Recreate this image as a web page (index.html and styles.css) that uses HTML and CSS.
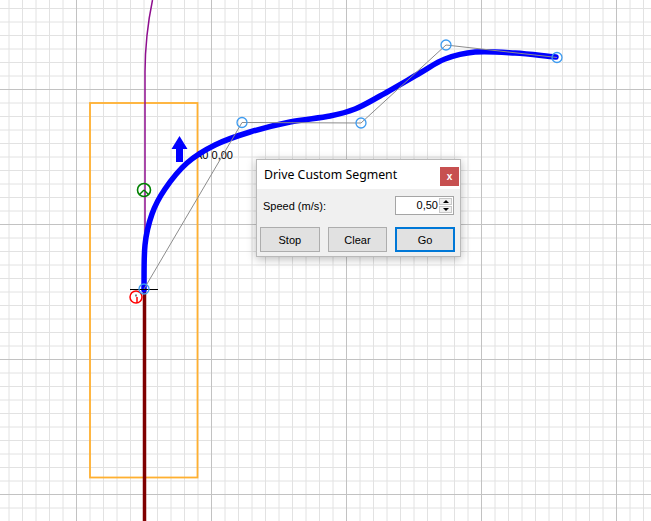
FILE: index.html
```html
<!DOCTYPE html>
<html>
<head>
<meta charset="utf-8">
<link rel="stylesheet" href="styles.css">
</head>
<body>
<div class="stage">
  <svg class="canvas" width="651" height="521" viewBox="0 0 651 521" xmlns="http://www.w3.org/2000/svg">
    <defs>
      <pattern id="grid" x="76" y="89" width="135" height="135" patternUnits="userSpaceOnUse">
        <g class="minor">
          <line x1="14" y1="0" x2="14" y2="135"/><line x1="27.5" y1="0" x2="27.5" y2="135"/>
          <line x1="41" y1="0" x2="41" y2="135"/><line x1="54.5" y1="0" x2="54.5" y2="135"/>
          <line x1="68" y1="0" x2="68" y2="135"/><line x1="81.5" y1="0" x2="81.5" y2="135"/>
          <line x1="95" y1="0" x2="95" y2="135"/><line x1="108.5" y1="0" x2="108.5" y2="135"/>
          <line x1="122" y1="0" x2="122" y2="135"/>
          <line x1="0" y1="14" x2="135" y2="14"/><line x1="0" y1="27.5" x2="135" y2="27.5"/>
          <line x1="0" y1="41" x2="135" y2="41"/><line x1="0" y1="54.5" x2="135" y2="54.5"/>
          <line x1="0" y1="68" x2="135" y2="68"/><line x1="0" y1="81.5" x2="135" y2="81.5"/>
          <line x1="0" y1="95" x2="135" y2="95"/><line x1="0" y1="108.5" x2="135" y2="108.5"/>
          <line x1="0" y1="122" x2="135" y2="122"/>
        </g>
        <g class="major">
          <line x1="0.5" y1="0" x2="0.5" y2="135"/>
          <line x1="0" y1="0.5" x2="135" y2="0.5"/>
        </g>
      </pattern>
    </defs>
    <rect x="0" y="0" width="651" height="521" fill="#ffffff"/>
    <rect x="0" y="0" width="651" height="521" fill="url(#grid)"/>

    <rect class="bounds" x="90" y="103" width="107.5" height="374.5"/>
    <path class="purple" d="M152.5,0 Q145.2,35 145,72 L145,290"/>
    <line class="trail" x1="144.5" y1="290" x2="144.5" y2="521"/>

    <text class="label" x="195" y="159">A0 0,00</text>
    <path class="arrow" d="M179.5,136 L187.5,149 L183,149 L183,162 L176,162 L176,149 L171.5,149 Z"/>

    <g class="goal">
      <circle cx="144" cy="190" r="6.5"/>
      <line x1="144" y1="190" x2="139.5" y2="194.5"/>
      <line x1="144" y1="190" x2="148.5" y2="194.5"/>
    </g>

    <path class="curve" d="M144,290 C144.2,275.8 143.7,257.7 145,245 C146.3,232.3 148.7,223.3 152,214 C155.3,204.7 159.2,197.5 165,189 C170.8,180.5 178.7,170.3 187,163 C195.3,155.7 204.5,150.2 215,145 C225.5,139.8 237.5,135.8 250,132 C262.5,128.2 276.7,124.7 290,122 C303.3,119.3 319.2,118.2 330,116 C340.8,113.8 346.7,112.3 355,109 C363.3,105.7 369.2,102 380,96 C390.8,90 409.2,79.2 420,73 C430.8,66.8 435.8,62.5 445,59 C454.2,55.5 463.3,53 475,52 C486.7,51 501.5,52.2 515,53 C528.5,53.8 542.3,55.7 556,57"/>

    <g class="ctrl">
      <polyline points="144,289 242,122.5 361,123 446,45 557,57.5"/>
    </g>

    <line class="tick" x1="130" y1="289.5" x2="158" y2="289.5"/>

    <g class="start">
      <circle cx="136" cy="297" r="6"/>
      <line x1="137" y1="297" x2="137" y2="303"/>
    </g>
    <rect x="135" y="294.5" width="2" height="2" fill="#808080"/>

    <g class="knots">
      <circle cx="144" cy="289" r="5"/>
      <circle cx="242" cy="122.5" r="5"/>
      <circle cx="361" cy="123" r="5"/>
      <circle cx="446" cy="45" r="5"/>
      <circle cx="557" cy="57.5" r="5"/>
    </g>
  </svg>

  <div class="dialog">
    <div class="titlebar">
      <span class="title">Drive Custom Segment</span>
      <span class="close">x</span>
    </div>
    <div class="body">
      <div class="field">
        <span class="field-label">Speed (m/s):</span>
        <div class="spin">
          <span class="spin-value">0,50</span>
          <div class="spin-arrows">
            <span class="spin-btn"><span class="tri-up"></span></span>
            <span class="spin-btn"><span class="tri-down"></span></span>
          </div>
        </div>
      </div>
      <div class="actions">
        <span class="btn">Stop</span>
        <span class="btn">Clear</span>
        <span class="btn btn-default">Go</span>
      </div>
    </div>
  </div>
</div>
</body>
</html>
```

FILE: styles.css
```css
html, body {
  margin: 0;
  padding: 0;
  background: #ffffff;
}

.stage {
  position: relative;
  width: 651px;
  height: 521px;
  overflow: hidden;
}

.canvas {
  display: block;
}

.minor line {
  stroke: #e2e2e2;
  stroke-width: 1;
}

.major line {
  stroke: #c2c2c2;
  stroke-width: 1;
}

.bounds {
  fill: none;
  stroke: #ffb030;
  stroke-width: 1.8;
}

.purple {
  fill: none;
  stroke: #8e0e8e;
  stroke-width: 1.5;
}

.trail {
  stroke: #7f0000;
  stroke-width: 3.5;
}

.label {
  font-family: "Liberation Sans", Arial, sans-serif;
  font-size: 11px;
  fill: #000000;
}

.arrow {
  fill: #0000ff;
}

.goal circle {
  fill: none;
  stroke: #008000;
  stroke-width: 1.6;
}

.goal line {
  stroke: #008000;
  stroke-width: 1.4;
}

.curve {
  fill: none;
  stroke: #0000ff;
  stroke-width: 5.5;
  stroke-linecap: round;
}

.ctrl polyline {
  fill: none;
  stroke: #8c8c8c;
  stroke-width: 1;
}

.tick {
  stroke: #000000;
  stroke-width: 1;
}

.start circle {
  fill: none;
  stroke: #ff0000;
  stroke-width: 1.5;
}

.start line {
  stroke: #ff0000;
  stroke-width: 1.5;
}

.knots circle {
  fill: none;
  stroke: #3d9bf0;
  stroke-width: 1.3;
}

/* dialog window */
.dialog {
  position: absolute;
  left: 256px;
  top: 159px;
  width: 203px;
  border: 1px solid #b9b9b9;
  background: #f0f0f0;
  box-shadow: 0 2px 9px rgba(0, 0, 0, 0.28);
  font-family: "Liberation Sans", Arial, sans-serif;
  font-size: 11px;
  color: #000000;
}

.titlebar {
  display: flex;
  justify-content: space-between;
  align-items: flex-start;
  height: 29px;
  background: #ffffff;
}

.title {
  font-family: "Noto Sans", "Open Sans", sans-serif;
  font-size: 12.3px;
  line-height: 29px;
  padding-left: 7px;
  color: #000000;
}

.close {
  display: flex;
  align-items: center;
  justify-content: center;
  width: 19px;
  height: 19px;
  margin-top: 7px;
  margin-right: 1px;
  background: #c75050;
  color: #ffffff;
  font-family: "Liberation Sans", Arial, sans-serif;
  font-weight: bold;
  font-size: 10px;
  line-height: 1;
}

.body {
  display: flex;
  flex-direction: column;
  gap: 12px;
  padding: 7px 5px 4px 3px;
}

.field {
  display: flex;
  justify-content: space-between;
  align-items: center;
  height: 19px;
}

.field-label {
  padding-left: 3px;
}

.spin {
  display: flex;
  align-items: stretch;
  width: 57px;
  height: 17px;
  border: 1px solid #a5a5a5;
  background: #ffffff;
  margin-right: 1px;
}

.spin-value {
  flex: 1;
  text-align: right;
  line-height: 17px;
  padding-right: 1px;
}

.spin-arrows {
  display: flex;
  flex-direction: column;
  width: 13px;
  margin: 1px 1px 1px 0;
  gap: 1px;
}

.spin-btn {
  flex: 1;
  display: flex;
  align-items: center;
  justify-content: center;
  background: #f0f0f0;
  border: 1px solid #c8c8c8;
}

.tri-up {
  width: 0;
  height: 0;
  border-left: 3px solid transparent;
  border-right: 3px solid transparent;
  border-bottom: 3px solid #000000;
}

.tri-down {
  width: 0;
  height: 0;
  border-left: 3px solid transparent;
  border-right: 3px solid transparent;
  border-top: 3px solid #000000;
}

.actions {
  display: flex;
  gap: 8px;
}

.btn {
  display: flex;
  align-items: center;
  justify-content: center;
  width: 58px;
  height: 23px;
  background: #e1e1e1;
  border: 1px solid #adadad;
}

.btn-default {
  width: 56px;
  height: 21px;
  border: 2px solid #0078d7;
}
```
